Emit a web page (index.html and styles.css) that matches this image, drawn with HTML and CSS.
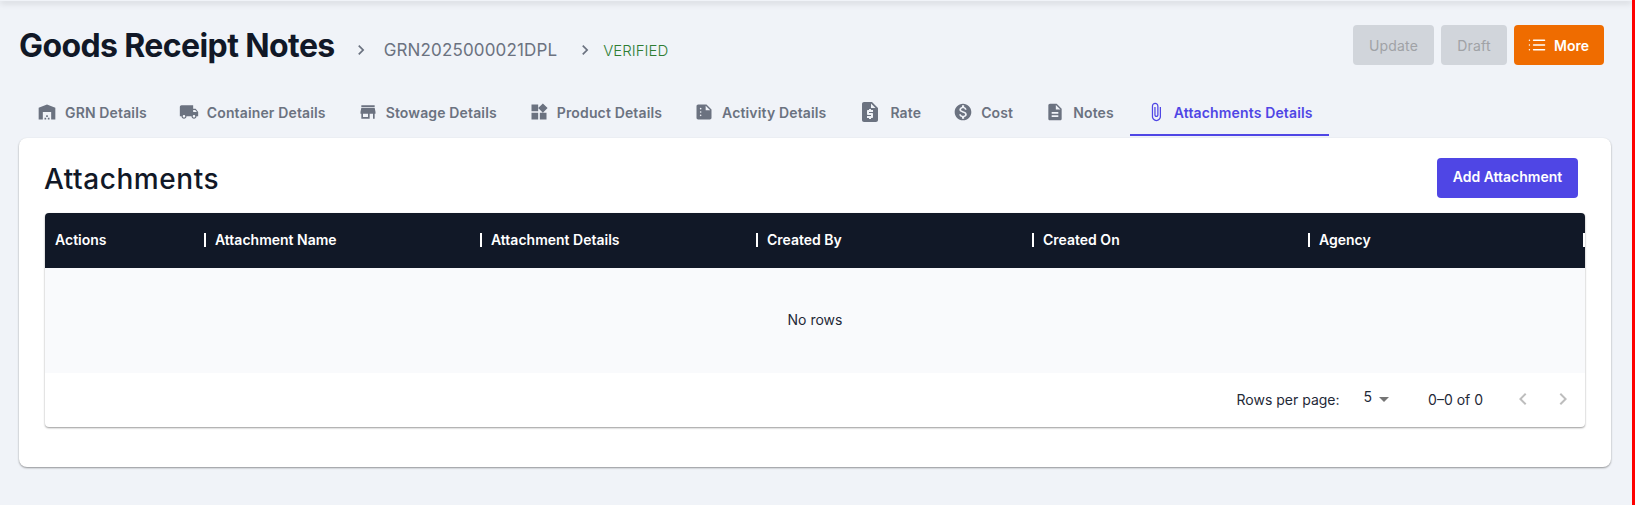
FILE: index.html
```html
<!DOCTYPE html>
<html lang="en">
<head>
<meta charset="utf-8">
<title>Goods Receipt Notes</title>
<link rel="stylesheet" href="styles.css">
</head>
<body>
<div class="appbar"></div>
<main class="page">
  <header class="top">
    <div class="crumbs">
      <h1 class="title">Goods Receipt Notes</h1>
      <svg class="chev" viewBox="0 0 24 24"><path d="M10 6 8.59 7.41 13.17 12l-4.58 4.59L10 18l6-6z"/></svg>
      <span class="crumb">GRN2025000021DPL</span>
      <svg class="chev" viewBox="0 0 24 24"><path d="M10 6 8.59 7.41 13.17 12l-4.58 4.59L10 18l6-6z"/></svg>
      <span class="status">VERIFIED</span>
    </div>
    <div class="actions">
      <button class="btn btn-off btn-update">Update</button>
      <button class="btn btn-off btn-draft">Draft</button>
      <button class="btn btn-more">
        <svg class="list-ico" viewBox="0 0 24 24"><path d="M8.25 6.75h12M8.25 12h12m-12 5.25h12M3.75 6.75h.01M3.75 12h.01M3.75 17.25h.01"/></svg>
        More
      </button>
    </div>
  </header>

  <nav class="tabs">
    <a class="tab"><svg class="ico" viewBox="0 0 24 24"><path d="M22 21V7L12 3 2 7v14h5v-9h10v9zm-11-2H9v2h2zm2-3h-2v2h2zm2 3h-2v2h2z"/></svg>GRN Details</a>
    <a class="tab"><svg class="ico" viewBox="0 0 24 24"><path d="M20 8h-3V4H3c-1.1 0-2 .9-2 2v11h2c0 1.66 1.34 3 3 3s3-1.34 3-3h6c0 1.66 1.34 3 3 3s3-1.34 3-3h2v-5zM6 18.5c-.83 0-1.5-.67-1.5-1.5s.67-1.5 1.5-1.5 1.5.67 1.5 1.5-.67 1.5-1.5 1.5m13.5-9 1.96 2.5H17V9.5zm-1.5 9c-.83 0-1.5-.67-1.5-1.5s.67-1.5 1.5-1.5 1.5.67 1.5 1.5-.67 1.5-1.5 1.5"/></svg>Container Details</a>
    <a class="tab"><svg class="ico" viewBox="0 0 24 24"><path d="M20 4H4v2h16zm1 10v-2l-1-5H4l-1 5v2h1v6h10v-6h4v6h2v-6zm-9 4H6v-4h6z"/></svg>Stowage Details</a>
    <a class="tab"><svg class="ico" viewBox="0 0 24 24"><path d="M13 13v8h8v-8zM3 21h8v-8H3zM3 3v8h8V3zm13.66-1.31L11 7.34 16.66 13l5.66-5.66z"/></svg>Product Details</a>
    <a class="tab"><svg class="ico" viewBox="0 0 24 24"><path d="M15 3H5c-1.1 0-1.99.9-1.99 2L3 19c0 1.1.89 2 1.99 2H19c1.1 0 2-.9 2-2V9zM8 17c-.55 0-1-.45-1-1s.45-1 1-1 1 .45 1 1-.45 1-1 1m0-4c-.55 0-1-.45-1-1s.45-1 1-1 1 .45 1 1-.45 1-1 1m0-4c-.55 0-1-.45-1-1s.45-1 1-1 1 .45 1 1-.45 1-1 1m6 1V4.5l5.5 5.5z"/></svg>Activity Details</a>
    <a class="tab"><svg class="ico ico-lg" viewBox="0 0 24 24"><path d="M14 2H6c-1.1 0-1.99.9-1.99 2L4 20c0 1.1.89 2 1.99 2H18c1.1 0 2-.9 2-2V8zm1 10h-4v1h3c.55 0 1 .45 1 1v3c0 .55-.45 1-1 1h-1v1h-2v-1H9v-2h4v-1h-3c-.55 0-1-.45-1-1v-3c0-.55.45-1 1-1h1V9h2v1h2zm-2-4V3.5L17.5 8z"/></svg>Rate</a>
    <a class="tab"><svg class="ico" viewBox="0 0 24 24"><path d="M12 2C6.48 2 2 6.48 2 12s4.48 10 10 10 10-4.48 10-10S17.52 2 12 2m1.41 16.09V20h-2.67v-1.93c-1.71-.36-3.16-1.46-3.27-3.4h1.96c.1 1.05.82 1.87 2.65 1.87 1.96 0 2.4-.98 2.4-1.59 0-.83-.44-1.61-2.67-2.14-2.48-.6-4.18-1.62-4.18-3.67 0-1.72 1.39-2.84 3.11-3.21V4h2.67v1.95c1.86.45 2.79 1.86 2.85 3.39H14.3c-.05-1.11-.64-1.87-2.22-1.87-1.5 0-2.4.68-2.4 1.64 0 .84.65 1.39 2.67 1.91s4.18 1.39 4.18 3.91c-.01 1.83-1.38 2.83-3.12 3.16"/></svg>Cost</a>
    <a class="tab"><svg class="ico" viewBox="0 0 24 24"><path d="M14 2H6c-1.1 0-1.99.9-1.99 2L4 20c0 1.1.89 2 1.99 2H18c1.1 0 2-.9 2-2V8zm2 16H8v-2h8zm0-4H8v-2h8zm-3-5V3.5L18.5 9z"/></svg>Notes</a>
    <a class="tab tab-on"><svg class="ico" viewBox="0 0 24 24"><path d="M16.5 6v11.5c0 2.21-1.79 4-4 4s-4-1.79-4-4V5c0-1.38 1.12-2.5 2.5-2.5s2.5 1.12 2.5 2.5v10.5c0 .55-.45 1-1 1s-1-.45-1-1V6H10v9.5c0 1.38 1.12 2.5 2.5 2.5s2.5-1.12 2.5-2.5V5c0-2.21-1.79-4-4-4S7 2.79 7 5v12.5c0 3.04 2.46 5.5 5.5 5.5s5.5-2.46 5.5-5.5V6z"/></svg>Attachments Details</a>
  </nav>

  <section class="card">
    <div class="card-head">
      <h2 class="card-title">Attachments</h2>
      <button class="btn btn-add">Add Attachment</button>
    </div>
    <div class="grid">
      <div class="grid-head">
        <div class="col col-first">Actions</div>
        <div class="col">Attachment Name</div>
        <div class="col">Attachment Details</div>
        <div class="col">Created By</div>
        <div class="col">Created On</div>
        <div class="col">Agency</div>
      </div>
      <div class="grid-body">No rows</div>
      <div class="grid-foot">
        <span class="rows-label">Rows per page:</span>
        <span class="rows-select">5<svg class="caret" viewBox="0 0 24 24"><path d="m7 10 5 5 5-5z"/></svg></span>
        <span class="range">0–0 of 0</span>
        <span class="pager">
          <svg class="page-ico" viewBox="0 0 24 24"><path d="M15.41 7.41 14 6l-6 6 6 6 1.41-1.41L10.83 12z"/></svg>
          <svg class="page-ico" viewBox="0 0 24 24"><path d="M10 6 8.59 7.41 13.17 12l-4.58 4.59L10 18l6-6z"/></svg>
        </span>
      </div>
    </div>
  </section>
</main>
</body>
</html>
```

FILE: styles.css
```css
* { box-sizing: border-box; }
html, body { margin: 0; height: 100%; }
body {
  background: #f0f3f8;
  border-right: 3px solid #ff0000;
  font-family: Inter, "Liberation Sans", sans-serif;
  color: #111827;
  overflow: hidden;
}
.appbar { height: 1px; box-shadow: 0 1px 6px rgba(0,0,0,.5); }
.page { padding: 24px 21px 0 19px; }
.top { display: flex; justify-content: space-between; align-items: flex-start; height: 61px; padding-right: 7px; }
.crumbs { display: flex; align-items: center; height: 40px; }
.title { margin: 2px 0 0; font-size: 32px; font-weight: 700; letter-spacing: -.6px; line-height: 40px; color: #111827; }
.chev { width: 20px; height: 20px; fill: #6b7280; margin: 10px 13px 0 16px; }
.crumb { font-size: 17px; letter-spacing: .15px; color: #6b7280; margin: 10px 2px 0 0; }
.status { font-size: 15px; font-weight: 300; color: #2e7d32; margin: 10px 0 0 -5px; }
.actions { display: flex; gap: 7px; }
.btn { border: 0; border-radius: 4px; font-family: inherit; font-size: 14px; font-weight: 500; height: 40px; padding: 0; display: flex; align-items: center; justify-content: center; }
.btn-off { background: #d1d5db; color: #a0a2a6; font-weight: 400; letter-spacing: .2px; }
.btn-update { width: 81px; }
.btn-draft { width: 66px; }
.btn-more { width: 90px; background: #ef6c00; color: #fff; gap: 6px; font-weight: 600; justify-content: flex-start; padding-left: 12px; }
.list-ico { width: 22px; height: 22px; fill: none; stroke: #fff; stroke-width: 1.6; stroke-linecap: round; }
.tabs { display: flex; height: 52px; margin-left: 2px; }
.tab { display: flex; align-items: center; gap: 8px; padding: 4px 16px 0; font-size: 14px; font-weight: 600; letter-spacing: .14px; color: #6b7280; height: 50px; border-bottom: 2px solid transparent; }
.tab-on { color: #4f46e5; border-bottom-color: #4f46e5; }
.ico { width: 20px; height: 20px; fill: #6b7280; flex: none; }
.ico-lg { width: 24px; height: 24px; }
.tab-on .ico { fill: #4f46e5; }
.card { background: #fff; border-radius: 8px; height: 329px; padding: 20px 26px 0; box-shadow: 0 1px 2px rgba(0,0,0,.4); }
.card-head { display: flex; justify-content: space-between; align-items: flex-start; height: 55px; padding-right: 7px; }
.card-title { margin: 1px 0 0 -1px; font-size: 28px; font-weight: 500; letter-spacing: .55px; line-height: 40px; color: #111827; }
.btn-add { width: 141px; background: #4f46e5; color: #fff; font-weight: 600; padding-bottom: 3px; }
.grid { border-radius: 4px; box-shadow: 0 1px 2px rgba(0,0,0,.4); background: #fff; }
.grid-head { display: grid; grid-template-columns: 161px repeat(4, 276px) 275px; height: 55px; padding-bottom: 1px; background: #111827; color: #fff; border-radius: 4px 4px 0 0; align-items: center; font-size: 14px; font-weight: 600; }
.col { height: 14px; line-height: 14px; border-right: 2px solid #fff; padding-left: 9px; }
.col-first { padding-left: 10px; }
.grid-body { height: 105px; padding-bottom: 2px; background: #f9fafc; display: flex; align-items: center; justify-content: center; font-size: 14px; color: #1f2937; }
.grid-foot { height: 54px; padding-bottom: 2px; display: flex; align-items: center; justify-content: flex-end; font-size: 14px; color: #1f2937; }
.rows-label { margin-right: 24px; }
.rows-select { display: flex; align-items: center; margin-right: 32px; margin-top: -5px; }
.caret { width: 24px; height: 24px; fill: #757575; margin-top: 4px; }
.range { margin-right: 28px; }
.pager { display: flex; gap: 16px; padding-right: 10px; }
.page-ico { width: 24px; height: 24px; fill: #bdbdbd; }
```
